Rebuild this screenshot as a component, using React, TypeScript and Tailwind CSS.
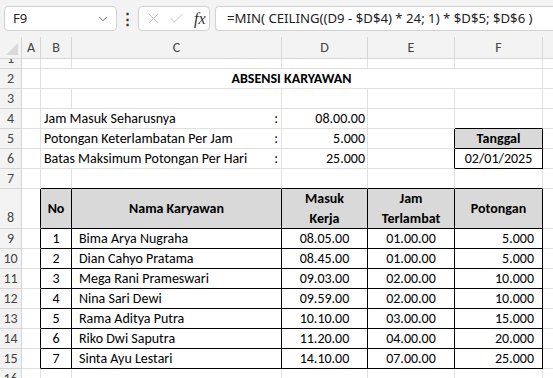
import { ChevronDown, X, Check } from 'lucide-react';

const cellFont = { fontFamily: 'Carlito, Calibri, Lato, sans-serif' };

const rows = [
	{ no: 1, nama: 'Bima Arya Nugraha', masuk: '08.05.00', jam: '01.00.00', potongan: '5.000' },
	{ no: 2, nama: 'Dian Cahyo Pratama', masuk: '08.45.00', jam: '01.00.00', potongan: '5.000' },
	{ no: 3, nama: 'Mega Rani Prameswari', masuk: '09.03.00', jam: '02.00.00', potongan: '10.000' },
	{ no: 4, nama: 'Nina Sari Dewi', masuk: '09.59.00', jam: '02.00.00', potongan: '10.000' },
	{ no: 5, nama: 'Rama Aditya Putra', masuk: '10.10.00', jam: '03.00.00', potongan: '15.000' },
	{ no: 6, nama: 'Riko Dwi Saputra', masuk: '11.20.00', jam: '04.00.00', potongan: '20.000' },
	{ no: 7, nama: 'Sinta Ayu Lestari', masuk: '14.10.00', jam: '07.00.00', potongan: '25.000' },
];

const info = [
	{ n: 4, label: 'Jam Masuk Seharusnya', value: '08.00.00' },
	{ n: 5, label: 'Potongan Keterlambatan Per Jam', value: '5.000' },
	{ n: 6, label: 'Batas Maksimum Potongan Per Hari', value: '25.000' },
];

function RowHead({ n }: { n: number | string }) {
	return (
		<div className="w-[22px] shrink-0 h-full flex items-center justify-center bg-[#f3f3f3] border-r border-b border-[#d6d6d6] text-[14px] text-[#444]">
			{n}
		</div>
	);
}

function Blank({ w }: { w: string }) {
	return <div className={`${w} shrink-0 h-full border-r border-b border-[#e0e0e0]`} />;
}

function EmptyRow({ n }: { n: number }) {
	return (
		<div className="flex h-[20px]">
			<RowHead n={n} />
			<Blank w="w-[19px]" />
			<Blank w="w-[31px]" />
			<Blank w="w-[210px]" />
			<Blank w="w-[86px]" />
			<Blank w="w-[87px]" />
			<Blank w="w-[88px]" />
			<Blank w="w-[40px]" />
		</div>
	);
}

export default function App() {
	return (
		<div className="w-[553px] h-[378px] overflow-hidden bg-white text-black" style={cellFont}>
			{/* formula bar */}
			<div className="h-[37px] bg-[#f3f3f3] flex items-center pl-[4px]" style={{ fontFamily: '"Noto Sans", "Open Sans", sans-serif' }}>
				<div className="w-[113px] h-[25px] bg-white border border-[#d1d1d1] rounded-[4px] flex items-center justify-between pl-[8px] pr-[6px] text-[13px] text-[#222]">
					<span>F9</span>
					<ChevronDown size={14} strokeWidth={1.5} className="text-[#555]" />
				</div>
				<div className="w-[21px] flex justify-center text-[#333] text-[15px] font-bold leading-none">⋮</div>
				<div className="w-[72px] h-[25px] bg-white border border-[#d1d1d1] rounded-[4px] flex items-center pl-[6px] gap-[6px]">
					<X size={17} strokeWidth={1.2} className="text-[#b5b5b5]" />
					<Check size={17} strokeWidth={1.2} className="text-[#b5b5b5]" />
					<span className="italic text-[16px] text-[#333] ml-[3px]" style={{ fontFamily: '"Liberation Serif", serif' }}>fx</span>
				</div>
				<div className="ml-[5px] flex-1 h-[25px] bg-white border border-[#d1d1d1] rounded-l-[4px] border-r-0 flex items-center pl-[11px] text-[13.2px] text-[#222] whitespace-nowrap">
					=MIN( CEILING((D9 - $D$4) * 24; 1) * $D$5; $D$6 )
				</div>
			</div>

			{/* column headers */}
			<div className="flex h-[22px] bg-[#f3f3f3] text-[14px] text-[#444]">
				<div className="w-[22px] shrink-0 h-full border-r border-b border-[#d6d6d6] relative">
					<svg width="22" height="22" className="absolute inset-0">
						<polygon points="18,6 18,18 6,18" fill="#d9d9d9" />
					</svg>
				</div>
				{[
					['A', 'w-[19px]'],
					['B', 'w-[31px]'],
					['C', 'w-[210px]'],
					['D', 'w-[86px]'],
					['E', 'w-[87px]'],
					['F', 'w-[88px]'],
					['', 'w-[40px]'],
				].map(([l, w]) => (
					<div key={l + w} className={`${w} shrink-0 h-full flex items-center justify-center border-r border-b border-[#d6d6d6]`}>
						{l}
					</div>
				))}
			</div>

			<div className="text-[14px] leading-none">
				{/* row 1, top half hidden */}
				<div className="h-[10px] overflow-hidden">
					<div className="-mt-[10px]">
						<EmptyRow n={1} />
					</div>
				</div>

				{/* row 2 title */}
				<div className="flex h-[20px]">
					<RowHead n={2} />
					<Blank w="w-[19px]" />
					<div className="w-[502px] shrink-0 h-full flex items-center justify-center font-bold border-r border-b border-[#e0e0e0]">
						ABSENSI KARYAWAN
					</div>
					<Blank w="w-[40px]" />
				</div>

				<EmptyRow n={3} />

				{info.map((r) => (
					<div key={r.n} className="flex h-[20px]">
						<RowHead n={r.n} />
						<Blank w="w-[19px]" />
						<div className="w-[241px] shrink-0 h-full flex items-center justify-between pl-[3px] pr-[3px] border-r border-b border-[#e0e0e0]">
							<span>{r.label}</span>
							<span>:</span>
						</div>
						<div className="w-[86px] shrink-0 h-full flex items-center justify-end pr-[2px] border-r border-b border-[#e0e0e0]">{r.value}</div>
						<div
							className={`w-[87px] shrink-0 h-full border-r border-b ${
								r.n === 4 ? 'border-r-[#e0e0e0] border-b-[#e0e0e0]' : 'border-r-black border-b-[#e0e0e0]'
							}`}
						/>
						{r.n === 4 && <div className="w-[88px] shrink-0 h-full border-r border-b border-r-[#e0e0e0] border-b-black" />}
						{r.n === 5 && (
							<div className="w-[88px] shrink-0 h-full flex items-center justify-center font-bold bg-[#d9d9d9] border-r border-b border-black">Tanggal</div>
						)}
						{r.n === 6 && <div className="w-[88px] shrink-0 h-full flex items-center justify-center border-r border-b border-black">02/01/2025</div>}
						<Blank w="w-[40px]" />
					</div>
				))}

				{/* row 7 */}
				<div className="flex h-[20px]">
					<RowHead n={7} />
					<Blank w="w-[19px]" />
					<div className="w-[31px] shrink-0 h-full border-r border-b border-r-[#e0e0e0] border-b-black" />
					<div className="w-[210px] shrink-0 h-full border-r border-b border-r-[#e0e0e0] border-b-black" />
					<div className="w-[86px] shrink-0 h-full border-r border-b border-r-[#e0e0e0] border-b-black" />
					<div className="w-[87px] shrink-0 h-full border-r border-b border-r-[#e0e0e0] border-b-black" />
					<div className="w-[88px] shrink-0 h-full border-r border-b border-r-[#e0e0e0] border-b-black" />
					<Blank w="w-[40px]" />
				</div>

				{/* row 8 header */}
				<div className="flex h-[40px]">
					<div className="w-[22px] shrink-0 h-full flex items-end justify-center pb-[3px] bg-[#f3f3f3] border-r border-b border-[#d6d6d6] text-[14px] text-[#444]">8</div>
					<div className="w-[19px] shrink-0 h-full border-r border-b border-r-black border-b-[#e0e0e0]" />
					<div className="w-[31px] shrink-0 h-full flex items-center justify-center font-bold bg-[#d9d9d9] border-r border-b border-black">No</div>
					<div className="w-[210px] shrink-0 h-full flex items-center justify-center font-bold bg-[#d9d9d9] border-r border-b border-black">Nama Karyawan</div>
					<div className="w-[86px] shrink-0 h-full flex flex-col items-center justify-center gap-[6px] font-bold bg-[#d9d9d9] border-r border-b border-black">
						<span>Masuk</span>
						<span>Kerja</span>
					</div>
					<div className="w-[87px] shrink-0 h-full flex flex-col items-center justify-center gap-[6px] font-bold bg-[#d9d9d9] border-r border-b border-black">
						<span>Jam</span>
						<span>Terlambat</span>
					</div>
					<div className="w-[88px] shrink-0 h-full flex items-center justify-center font-bold bg-[#d9d9d9] border-r border-b border-black">Potongan</div>
					<Blank w="w-[40px]" />
				</div>

				{rows.map((r, i) => (
					<div key={r.no} className="flex h-[20px]">
						<RowHead n={9 + i} />
						<div className="w-[19px] shrink-0 h-full border-r border-b border-r-black border-b-[#e0e0e0]" />
						<div className="w-[31px] shrink-0 h-full flex items-center justify-center border-r border-b border-black">{r.no}</div>
						<div className="w-[210px] shrink-0 h-full flex items-center pl-[7px] border-r border-b border-black">{r.nama}</div>
						<div className="w-[86px] shrink-0 h-full flex items-center justify-center border-r border-b border-black">{r.masuk}</div>
						<div className="w-[87px] shrink-0 h-full flex items-center justify-center border-r border-b border-black">{r.jam}</div>
						<div className="w-[88px] shrink-0 h-full flex items-center justify-end pr-[8px] border-r border-b border-black">{r.potongan}</div>
						<Blank w="w-[40px]" />
					</div>
				))}

				<EmptyRow n={16} />
			</div>
		</div>
	);
}
